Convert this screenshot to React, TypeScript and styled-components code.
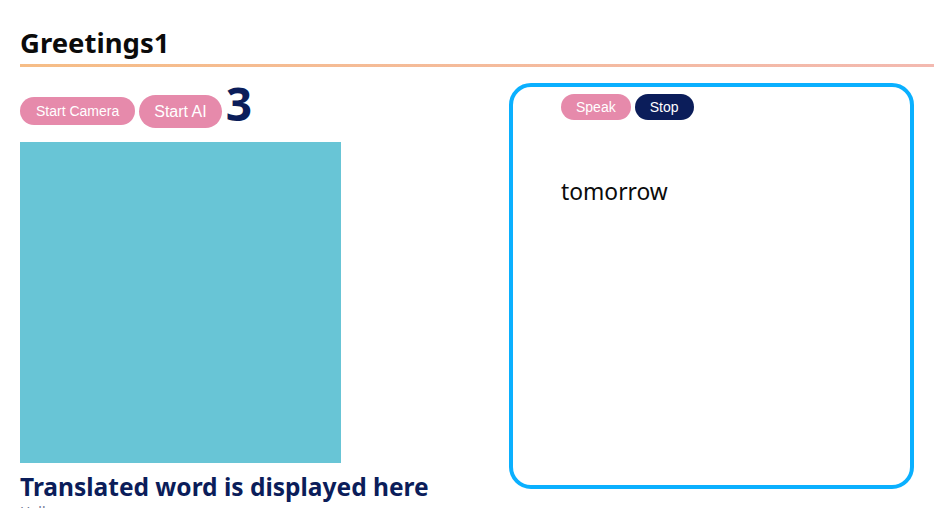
import styled, { createGlobalStyle } from "styled-components";

const GlobalStyle = createGlobalStyle`
  html, body {
    margin: 0;
    padding: 0;
    background: #ffffff;
    overflow: hidden;
  }
  body {
    font-family: "Noto Sans", "Liberation Sans", sans-serif;
  }
`;

const Page = styled.main`
  padding: 24px 0 0 20px;
  color: #111;
`;

const Header = styled.header`
  border-bottom: 3px solid transparent;
  border-image: linear-gradient(90deg, #f6bd86, #f3b9b0) 1;
  padding-bottom: 2px;
`;

const Title = styled.h1`
  margin: 0;
  font-size: 27.5px;
  line-height: 38px;
  font-weight: 700;
  color: #0b0b0b;
`;

const Columns = styled.div`
  display: flex;
  align-items: flex-start;
  padding-right: 20px;
`;

const LeftColumn = styled.section`
  flex: 1;
  padding-top: 24px;
`;

const Controls = styled.div`
  display: flex;
  align-items: center;
  gap: 4px;
  height: 40px;
`;

const PillButton = styled.button<{ $large?: boolean; $compact?: boolean; $dark?: boolean }>`
  font-family: "Liberation Sans", Arial, sans-serif;
  font-size: ${(p) => (p.$large ? 16 : 14)}px;
  line-height: ${(p) => (p.$large ? 17 : 16)}px;
  color: #fff;
  background: ${(p) => (p.$dark ? "#0b1d5a" : "#e68aab")};
  border: none;
  border-radius: 999px;
  padding: ${(p) => (p.$large ? "8px 15px" : p.$compact ? "5px 15px" : "6px 16px")};
  cursor: pointer;
`;

const Count = styled.span`
  font-size: 46px;
  font-weight: 700;
  line-height: 40px;
  color: #0b1d5a;
  margin-top: -17px;
`;

const Camera = styled.div`
  width: 321px;
  height: 321px;
  margin-top: 11px;
  background: #68c5d6;
`;

const Translated = styled.h2`
  margin: 9px 0 0;
  font-size: 24.5px;
  line-height: 30px;
  font-weight: 700;
  color: #0b1d5a;
`;

const Hint = styled.p`
  margin: 0;
  font-size: 14px;
  line-height: 20px;
  color: #6f7692;
`;

const Panel = styled.section`
  box-sizing: border-box;
  width: 405px;
  height: 406px;
  margin-top: 16px;
  border: 4px solid #0ab0ff;
  border-radius: 22px;
  padding: 7px 0 0 48px;
`;

const SpeechControls = styled.div`
  display: flex;
  gap: 4px;
`;

const SpeechText = styled.p`
  margin: 57px 0 0;
  font-size: 22.8px;
  line-height: 30px;
  color: #0b0b0b;
`;

export default function App() {
  return (
    <>
      <GlobalStyle />
      <Page>
        <Header>
          <Title>Greetings1</Title>
        </Header>
        <Columns>
          <LeftColumn>
            <Controls>
              <PillButton type="button">Start Camera</PillButton>
              <PillButton type="button" $large>
                Start AI
              </PillButton>
              <Count>3</Count>
            </Controls>
            <Camera />
            <Translated>Translated word is displayed here</Translated>
            <Hint>Hello</Hint>
          </LeftColumn>
          <Panel>
            <SpeechControls>
              <PillButton type="button" $compact>
                Speak
              </PillButton>
              <PillButton type="button" $compact $dark>
                Stop
              </PillButton>
            </SpeechControls>
            <SpeechText>tomorrow</SpeechText>
          </Panel>
        </Columns>
      </Page>
    </>
  );
}
